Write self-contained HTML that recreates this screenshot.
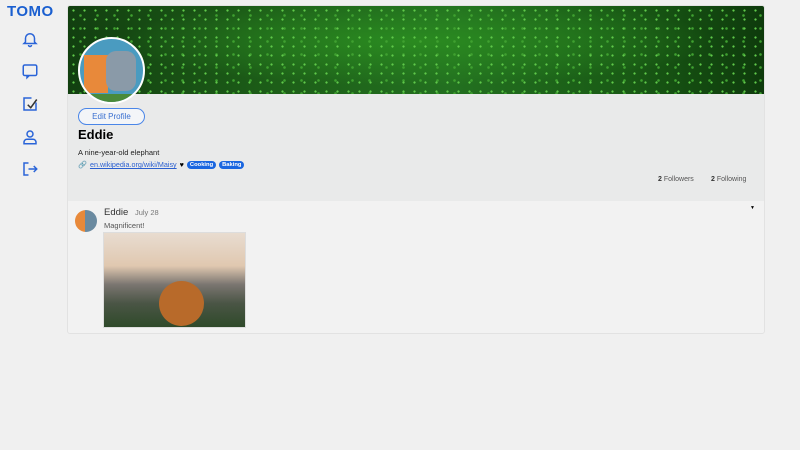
<!DOCTYPE html>
<html><head><style>
*{margin:0;padding:0;box-sizing:border-box}
body{width:800px;height:450px;background:#f0f0f0;font-family:"Liberation Sans",sans-serif;position:relative;overflow:hidden}
.logo{position:absolute;left:7px;top:3px;font-weight:bold;font-size:15px;color:#1a5fd0;letter-spacing:0.5px}
.ic{position:absolute;left:21px;width:18px;height:18px}
.card{position:absolute;left:67px;top:5px;width:698px;height:329px;border:1px solid #e2e2e2;border-radius:3px;overflow:hidden;background:#f2f2f2}
.banner{position:absolute;left:0;top:0;width:698px;height:88px;background:
radial-gradient(circle,#5fc84a 0 0.8px,transparent 1.4px) 0 0/11px 9px,
radial-gradient(circle,#3fa030 0 1px,transparent 1.6px) 4px 3px/17px 13px,
radial-gradient(ellipse at 50% 40%,#2a8a20,transparent 60%),
linear-gradient(90deg,#123f10,#1d5e18 30%,#237020 55%,#195a15 80%,#0e3a0c)}
.info{position:absolute;left:0;top:88px;width:698px;height:107px;background:#e9eaea}
.av{position:absolute;left:10px;top:31px;width:67px;height:67px;border-radius:50%;border:2px solid #fff;background:#4a9bc0;overflow:hidden}
.btn{position:absolute;left:10px;top:102px;width:67px;height:17px;border:1px solid #4a86e8;border-radius:9px;font-size:8px;color:#3a70d0;text-align:center;line-height:15px;background:#f3f5f8}
.name{position:absolute;left:10px;top:121px;font-size:13px;font-weight:bold}
.bio{position:absolute;left:10px;top:142px;font-size:7.5px;color:#222}
.links{position:absolute;left:10px;top:154px;font-size:7.2px;display:flex;align-items:center;gap:3px}
.links a{color:#2a5fd0;text-decoration:underline}
.tag{background:#1a66e0;color:#fff;font-weight:bold;font-size:5.8px;border-radius:5px;padding:1px 3px}
.stats{position:absolute;top:170px;font-size:7px;color:#555}
.stats b{color:#333}
</style></head><body>
<div class="logo">TOMO</div>
<svg class="ic" style="top:30px" viewBox="0 0 24 24" fill="none" stroke="#2a64d8" stroke-width="2"><path d="M6 16V11a6 6 0 0 1 12 0v5l2 2H4z"/><path d="M10 20a2 2 0 0 0 4 0"/></svg>
<svg class="ic" style="top:62px" viewBox="0 0 24 24" fill="none" stroke="#2a64d8" stroke-width="2"><rect x="3" y="4" width="18" height="14" rx="2"/><path d="M8 18v3l3-3"/></svg>
<svg class="ic" style="top:95px" viewBox="0 0 24 24" fill="none" stroke="#2a64d8" stroke-width="2"><path d="M14 4H4v16h16V10"/><path d="M9 13l4 4 8-11" stroke="#333"/></svg>
<svg class="ic" style="top:128px" viewBox="0 0 24 24" fill="none" stroke="#2a64d8" stroke-width="2"><circle cx="12" cy="8" r="4"/><path d="M4 21v-2a4 4 0 0 1 4-4h8a4 4 0 0 1 4 4v2z"/></svg>
<svg class="ic" style="top:160px" viewBox="0 0 24 24" fill="none" stroke="#2a64d8" stroke-width="2"><path d="M10 4H4v16h6"/><path d="M10 12h11M17 8l4 4-4 4"/></svg>
<div class="card">
<div class="banner"></div>
<div class="info"></div>
<div class="av"><div style="position:absolute;left:4px;top:16px;width:24px;height:38px;background:#e8893a"></div><div style="position:absolute;left:26px;top:12px;width:30px;height:40px;background:#8a9aa8;border-radius:10px"></div><div style="position:absolute;left:0;top:55px;width:67px;height:12px;background:#4a8a3a"></div></div>
<div class="btn">Edit Profile</div>
<div class="name">Eddie</div>
<div class="bio">A nine-year-old elephant</div>
<div class="links"><span>🔗</span><a>en.wikipedia.org/wiki/Maisy</a><span>♥</span><span class="tag">Cooking</span><span class="tag">Baking</span></div>
<div class="stats" style="left:590px"><b>2</b> Followers</div>
<div class="stats" style="left:643px"><b>2</b> Following</div>
<div style="position:absolute;left:682px;top:199px;font-size:5px">▼</div>
<div style="position:absolute;left:7px;top:204px;width:22px;height:22px;border-radius:50%;background:linear-gradient(90deg,#e8893a 45%,#6a8aa0 45%)"></div>
<div style="position:absolute;left:36px;top:201px;font-size:9.5px;color:#333">Eddie <span style="font-size:7.5px;color:#777;margin-left:4px">July 28</span></div>
<div style="position:absolute;left:36px;top:215px;font-size:7.5px;color:#555">Magnificent!</div>
<div style="position:absolute;left:35px;top:226px;width:143px;height:96px;border:1px solid #ddd;background:linear-gradient(#e8dcd0 0%,#e0c8b0 35%,#7a7570 55%,#4a5545 75%,#2f4a2a 100%)"><div style="position:absolute;left:55px;top:48px;width:45px;height:45px;border-radius:50%;background:#b86a2a"></div></div>
</div>
</body></html>
